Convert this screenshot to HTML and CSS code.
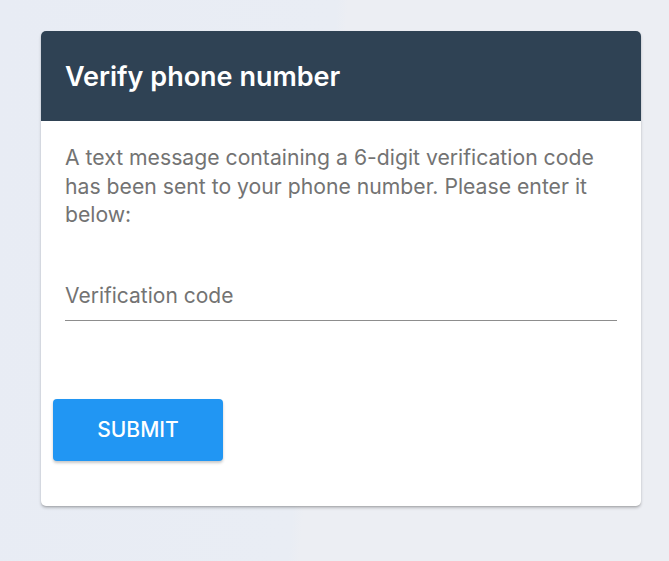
FILE: index.html
```html
<!DOCTYPE html>
<html lang="en">
<head>
<meta charset="utf-8">
<title>Verify phone number</title>
<link rel="stylesheet" href="styles.css">
</head>
<body>
<main class="page">
  <section class="card">
    <header class="card-header">
      <h1 class="card-title">Verify phone number</h1>
    </header>
    <div class="card-body">
      <p class="intro">A text message containing a 6-digit verification code has been sent to your phone number. Please enter it below:</p>
      <div class="field">
        <input class="field-input" type="text" placeholder="Verification code">
      </div>
    </div>
    <div class="card-actions">
      <button class="btn-submit" type="button">SUBMIT</button>
    </div>
  </section>
</main>
</body>
</html>
```
FILE: styles.css
```css
* { box-sizing: border-box; }
html, body { margin: 0; height: 100%; }
body {
  background: linear-gradient(95deg, #e8ecf4 0%, #e9edf4 47%, #eceef3 48.5%, #eceef3 100%);
  font-family: Inter, "Noto Sans", sans-serif;
}
.page {
  padding: 31px 28px 0 41px;
}
.card {
  width: 600px;
  background: #ffffff;
  border-radius: 5px;
  box-shadow: 0 2px 3px rgba(0,0,0,0.22), 0 1px 1px rgba(0,0,0,0.08);
  overflow: hidden;
}
.card-header {
  background: #2f4254;
  height: 90px;
  display: flex;
  align-items: center;
  padding: 0 24px;
}
.card-title {
  margin: 0;
  color: #ffffff;
  font-size: 27px;
  font-weight: 600;
  line-height: 32px;
  padding-top: 2px;
}
.card-body {
  padding: 22px 24px 0 24px;
}
.intro {
  margin: 0;
  color: #737373;
  font-size: 21.2px;
  line-height: 28.5px;
}
.field {
  margin-top: 55px;
}
.field-input {
  display: block;
  width: 100%;
  border: none;
  border-bottom: 1px solid #8d8d8d;
  padding: 0 0 12px 0;
  font-family: Inter, "Noto Sans", sans-serif;
  font-size: 21px;
  line-height: 24px;
  height: 37px;
  color: #333;
  background: transparent;
  outline: none;
}
.field-input::placeholder { color: #737373; }
.card-actions {
  padding: 78px 12px 45px 12px;
}
.btn-submit {
  display: block;
  width: 170px;
  height: 62px;
  border: none;
  border-radius: 4px;
  background: #2196f3;
  color: #ffffff;
  font-family: Inter, "Noto Sans", sans-serif;
  font-size: 21px;
  font-weight: 500;
  box-shadow: 0 2px 3px rgba(0,0,0,0.22);
  cursor: pointer;
}
```
